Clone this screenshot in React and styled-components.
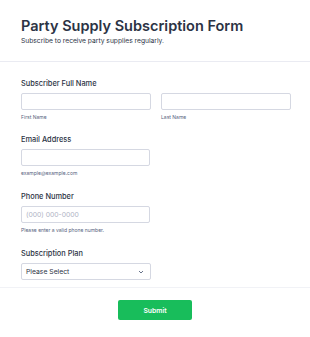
import React, { useState } from "react";
import styled, { createGlobalStyle } from "styled-components";

const Global = createGlobalStyle`
  html, body {
    margin: 0;
    padding: 0;
    background: #ffffff;
  }
  body {
    font-family: Inter, "Noto Sans", "Liberation Sans", sans-serif;
    color: #2c3345;
  }
  * {
    box-sizing: border-box;
  }
`;

const Page = styled.div`
  width: 310px;
  background: #fff;
`;

const Header = styled.div`
  padding: 17px 21px 0;
  height: 62px;
  border-bottom: 1px solid #eaebf2;
`;

const Title = styled.h1`
  margin: 0;
  font-size: 14.5px;
  line-height: 18px;
  font-weight: 600;
  color: #2c3345;
`;

const Subtitle = styled.p`
  margin: 2px 0 0;
  font-size: 6.7px;
  line-height: 9px;
  color: #2c3345;
`;

const Form = styled.form`
  padding: 17px 21px 0;
  display: flex;
  flex-direction: column;
  height: 226px;
  border-bottom: 1px solid #f1f2f6;
`;

const Field = styled.div`
  display: flex;
  flex-direction: column;
  margin-bottom: ${(p) => p.$gap || 16}px;
`;

const Label = styled.label`
  font-size: 7.4px;
  line-height: 10px;
  font-weight: 500;
  color: #2c3345;
  margin-bottom: 4px;
`;

const Row = styled.div`
  display: flex;
  gap: 10px;
`;

const Col = styled.div`
  display: flex;
  flex-direction: column;
  width: 130px;
`;

const Input = styled.input`
  width: ${(p) => p.$w || 130}px;
  height: 17px;
  border: 1px solid #d5d8e2;
  border-radius: 2px;
  padding: 0 4px;
  font-family: inherit;
  font-size: 6.8px;
  color: #2c3345;
  outline: none;
  &::placeholder {
    color: #b0b4c5;
  }
`;

const Sub = styled.span`
  font-size: 5px;
  line-height: 8px;
  color: #57647e;
  margin-top: 3px;
`;

const SelectBox = styled.div`
  width: 130px;
  height: 17px;
  border: 1px solid #d5d8e2;
  border-radius: 2px;
  padding: 0 6px 0 4px;
  display: flex;
  align-items: center;
  justify-content: space-between;
  font-size: 6.8px;
  color: #2c3345;
`;

const Footer = styled.div`
  display: flex;
  justify-content: center;
  padding-top: 12px;
`;

const Submit = styled.button`
  width: 74px;
  height: 20px;
  border: none;
  border-radius: 2px;
  background: #18bd5b;
  color: #fff;
  font-family: inherit;
  font-size: 6.8px;
  font-weight: 600;
  cursor: pointer;
`;

const Chevron = () => (
  <svg width="6" height="4" viewBox="0 0 6 4" fill="none">
    <path d="M1 1l2 2 2-2" stroke="#57647e" strokeWidth="0.9" />
  </svg>
);

export default function App() {
  const [plan] = useState("Please Select");
  return (
    <Page>
      <Global />
      <Header>
        <Title>Party Supply Subscription Form</Title>
        <Subtitle>Subscribe to receive party supplies regularly.</Subtitle>
      </Header>
      <Form onSubmit={(e) => e.preventDefault()}>
        <Field $gap={14}>
          <Label>Subscriber Full Name</Label>
          <Row>
            <Col>
              <Input />
              <Sub>First Name</Sub>
            </Col>
            <Col>
              <Input />
              <Sub>Last Name</Sub>
            </Col>
          </Row>
        </Field>
        <Field $gap={15}>
          <Label>Email Address</Label>
          <Input $w={129} />
          <Sub>example@example.com</Sub>
        </Field>
        <Field $gap={15}>
          <Label>Phone Number</Label>
          <Input $w={129} placeholder="(000) 000-0000" />
          <Sub>Please enter a valid phone number.</Sub>
        </Field>
        <Field>
          <Label>Subscription Plan</Label>
          <SelectBox>
            {plan}
            <Chevron />
          </SelectBox>
        </Field>
      </Form>
      <Footer>
        <Submit type="button">Submit</Submit>
      </Footer>
    </Page>
  );
}
